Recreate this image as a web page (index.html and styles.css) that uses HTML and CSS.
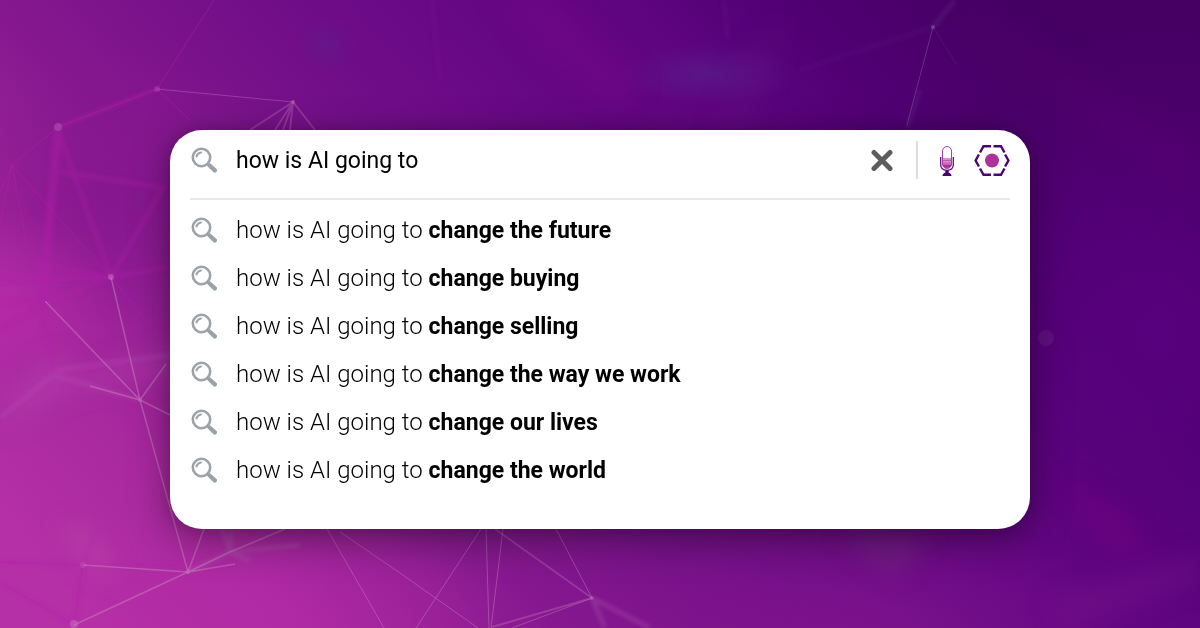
FILE: index.html
```html
<!DOCTYPE html>
<html lang="en">
<head>
<meta charset="utf-8">
<meta name="viewport" content="width=device-width, initial-scale=1">
<title>how is AI going to</title>
<link rel="stylesheet" href="styles.css">
</head>
<body class="page">
<svg class="backdrop" viewBox="0 0 1200 628" preserveAspectRatio="xMidYMid slice" aria-hidden="true">
  <defs>
    <linearGradient id="base" gradientUnits="userSpaceOnUse" x1="100" y1="628" x2="900" y2="-100">
      <stop offset="0" stop-color="#b530a6"/>
      <stop offset=".14" stop-color="#a8289e"/>
      <stop offset=".32" stop-color="#85188f"/>
      <stop offset=".5" stop-color="#710e88"/>
      <stop offset=".62" stop-color="#670884"/>
      <stop offset=".74" stop-color="#600580"/>
      <stop offset=".86" stop-color="#500073"/>
      <stop offset="1" stop-color="#460064"/>
    </linearGradient>
    <radialGradient id="violet"><stop offset="0" stop-color="#58007e"/><stop offset="1" stop-color="#58007e" stop-opacity="0"/></radialGradient>
    <radialGradient id="magenta"><stop offset="0" stop-color="#86178f"/><stop offset="1" stop-color="#86178f" stop-opacity="0"/></radialGradient>
    <radialGradient id="pink"><stop offset="0" stop-color="#b82bab"/><stop offset="1" stop-color="#b82bab" stop-opacity="0"/></radialGradient>
    <radialGradient id="teal"><stop offset="0" stop-color="#57248c"/><stop offset="1" stop-color="#57248c" stop-opacity="0"/></radialGradient>
    <filter id="soft" filterUnits="userSpaceOnUse" x="-60" y="-60" width="1320" height="748" color-interpolation-filters="sRGB"><feGaussianBlur stdDeviation="12"/></filter>
    <filter id="fine" filterUnits="userSpaceOnUse" x="-20" y="-20" width="1240" height="668" color-interpolation-filters="sRGB"><feGaussianBlur stdDeviation="2"/></filter>
  </defs>
  <rect width="1200" height="628" fill="url(#base)"/>
  <ellipse cx="1160" cy="330" rx="240" ry="300" fill="url(#violet)"/>
  <ellipse cx="850" cy="640" rx="280" ry="130" fill="url(#magenta)" opacity=".6"/>
  <ellipse cx="120" cy="190" rx="160" ry="140" fill="url(#magenta)"/>
  <ellipse cx="0" cy="300" rx="120" ry="90" fill="url(#pink)" opacity=".7"/>
  <ellipse cx="260" cy="610" rx="240" ry="110" fill="url(#pink)" opacity=".5"/>
  <ellipse cx="710" cy="74" rx="90" ry="30" fill="url(#teal)" opacity=".55"/>
  <ellipse cx="325" cy="45" rx="32" ry="28" fill="url(#teal)" opacity=".35"/>
  <g filter="url(#soft)">
    <path d="M495 -10L545 -10L640 80L615 110L540 50Z" fill="#7b0886" opacity=".4"/>
    <path d="M740 60L790 10L750 130H715Z" fill="#641082" opacity=".3"/>
    <path d="M960 0L1200 150V210L1100 140Z" fill="#5a0075" opacity=".35"/>
    <path d="M1050 600L1200 555V580L1070 628Z" fill="#771688" opacity=".4"/>
    <path d="M1060 480L1120 510L1150 560L1110 545Z" fill="#7d007b" opacity=".4"/>
    <path d="M840 535L930 535L895 575Z" fill="#76347c" opacity=".4"/>
    <path d="M20 385L55 355L75 375L180 350V370L70 390L0 430Z" fill="#b243ae" opacity=".5"/>
    <path d="M60 530L85 520L120 580L90 570Z" fill="#bf50aa" opacity=".4"/>
  </g>
  <g filter="url(#fine)" fill="none" stroke="#b31fab" stroke-width="4" opacity=".4">
    <path d="M58 127L157 89M60 172L165 188M58 130L111 277L165 185M0 278L111 277L168 267M0 302L46 302L111 277M30 262L111 277M0 330L46 302M40 300L55 375"/>
    <path stroke-width="9" d="M58 130L42 300"/>
    <path d="M0 562L83 565L230 565M83 565L74 622M0 582L74 625M83 565L97 530" opacity=".6"/>
    <path d="M53 375L140 400M53 375L0 418M55 370L170 355" stroke="#ba5cba" opacity=".7"/>
    <path d="M188 572L230 552L300 545M222 528L230 552L232 528M230 552L250 561M592 598L650 628M592 598L605 628" stroke="#b05db0"/>
    <path d="M432 0L440 80M724 0L728 40" stroke="#85239a" opacity=".5"/>
    <path d="M933 27L955 0M920 90L907 130" stroke="#72459c" opacity=".7"/>
    <path d="M933 27L800 70" stroke="#72459c" opacity=".3"/>
  </g>
  <g fill="none" stroke="#b71eac" opacity=".45">
    <path d="M214 0L157 89L58 127L12 165L0 192M12 165L0 222M12 165L30 262M12 165L111 277M111 277L170 350M0 285L111 277M0 296L46 302M157 89L190 120M0 562L83 565L74 622M0 582L74 625"/>
  </g>
  <g fill="none" stroke="#c783bd" stroke-width="1" opacity=".65">
    <path d="M111 277L140 400L188 572L204 529M46 302L140 400L166 364M140 400L170 415M140 400L90 386M83 565L188 572M188 572L230 552L285 529M74 625L188 572L235 564" stroke-width="1.500" opacity=".8"/>
    <path d="M157 89L293 102" opacity=".6"/>
    <path d="M293 102L250 130M293 102L275 130M293 102L283 130M293 102L290 130M293 102L315 130" stroke-width="2" opacity=".5"/>
    <path d="M327 529L384 628M340 532L400 573L478 628M481 529L416 628M486 529L489 628M503 529L491 628M556 529L592 598M592 598L512 628" opacity=".7"/>
    <path d="M495 529L592 598L492 627" stroke-width="2" opacity=".5"/>
    <path d="M933 27L907 125" stroke="#9065a5" opacity=".7"/>
    <path d="M933 27L957 65" stroke="#9065a5" opacity=".25"/>
  </g>
  <g fill="#c879c0" opacity=".5">
    <circle cx="58" cy="127" r="4" opacity=".7"/><circle cx="157" cy="89" r="3" opacity=".5"/>
    <circle cx="111" cy="277" r="3"/><circle cx="46" cy="302" r="1"/><circle cx="293" cy="102" r="2"/>
    <circle cx="140" cy="400" r="2"/><circle cx="188" cy="572" r="2"/><circle cx="74" cy="624" r="4"/>
    <circle cx="83" cy="565" r="3" opacity=".5"/><circle cx="592" cy="598" r="2" opacity=".7"/>
    <circle cx="933" cy="27" r="2" fill="#8b6bb0"/>
  </g>
  <circle cx="1046" cy="338" r="8" fill="#742a86" opacity=".35"/>
</svg>
<svg class="sprite" aria-hidden="true">
  <symbol id="lens" viewBox="0 0 26 26">
    <circle cx="10.500" cy="10.500" r="8.700" fill="none" stroke="#9aa3aa" stroke-width="2.600"/>
    <path d="M5.500 9.500A5.500 5.500 0 0 1 10 5.500" fill="none" stroke="#9aa3aa" stroke-width="2" stroke-linecap="round"/>
    <path d="M16.500 16.500L19 19" stroke="#9aa3aa" stroke-width="3"/>
    <path d="M18.600 18.500L23.800 23.300" stroke="#9aa3aa" stroke-width="4.400" stroke-linecap="round"/>
  </symbol>
</svg>
<main class="card">
  <form class="search" role="search">
    <svg class="lens"><use href="#lens"/></svg>
    <input class="query" type="text" aria-label="Search" value="how is AI going to" autocomplete="off">
    <button class="tool clear" type="reset" aria-label="Clear">
      <svg width="22" height="22" viewBox="0 0 22 22"><path d="M3 3.500L19 19.500M19 3.500L3 19.500" stroke="#5d5d5d" stroke-width="5" stroke-linecap="round"/></svg>
    </button>
    <span class="divider"></span>
    <button class="tool voice" type="button" aria-label="Search by voice">
      <svg width="14" height="32" viewBox="0 0 14 32">
        <path d="M2.500 14H11.500V19.500A4.500 4.500 0 0 1 2.500 19.500Z" fill="#d78fc9"/>
        <path d="M2.500 16.500H11.500M2.500 19H11.500" stroke="#bd5bb0" stroke-width="1"/>
        <path d="M2.500 20.500H11.500Q11 24 7 24T2.500 20.500Z" fill="#ad2f98"/>
        <rect x="2.500" y="2.500" width="9" height="22" rx="4.500" fill="none" stroke="#b13aa0"/>
        <path d="M.7 13V20.500Q.7 26.300 7 26.300T13.300 20.500V13" fill="none" stroke="#5b1281" stroke-width="1.300"/>
        <path d="M5 26.500H9L8.500 28.500Q11.500 29.500 11.500 32H2.500Q2.500 29.500 5.500 28.500Z" fill="#4b0070"/>
      </svg>
    </button>
    <button class="tool image" type="button" aria-label="Search by image">
      <svg width="36" height="32" viewBox="0 0 36 32">
        <g fill="none" stroke="#4b0572" stroke-width="2.400">
          <path d="M17 2.200H9.500L6 8.500M19.500 2.200H27L30.500 8.500M17 30.800H9.500L6 24.500M19.500 30.800H27L30.500 24.500"/>
          <path d="M4.900 10.500L1.600 16.500L4.900 22.500M31.100 10.500L34.400 16.500L31.100 22.500"/>
        </g>
        <circle cx="18" cy="16.500" r="7" fill="#ae3299"/>
      </svg>
    </button>
  </form>
  <ul class="suggestions">
    <li><a class="suggestion" href="#"><svg class="lens"><use href="#lens"/></svg><span>how is AI going to <b>change the future</b></span></a></li>
    <li><a class="suggestion" href="#"><svg class="lens"><use href="#lens"/></svg><span>how is AI going to <b>change buying</b></span></a></li>
    <li><a class="suggestion" href="#"><svg class="lens"><use href="#lens"/></svg><span>how is AI going to <b>change selling</b></span></a></li>
    <li><a class="suggestion" href="#"><svg class="lens"><use href="#lens"/></svg><span>how is AI going to <b>change the way we work</b></span></a></li>
    <li><a class="suggestion" href="#"><svg class="lens"><use href="#lens"/></svg><span>how is AI going to <b>change our lives</b></span></a></li>
    <li><a class="suggestion" href="#"><svg class="lens"><use href="#lens"/></svg><span>how is AI going to <b>change the world</b></span></a></li>
  </ul>
</main>
</body>
</html>
```
FILE: styles.css
```css
*,
*::before,
*::after {
  box-sizing: border-box;
}

.page {
  min-height: 100vh;
  margin: 0;
  padding: 130px 24px 64px;
  background: #690b83;
  color: #000;
  font-family: Roboto, "Liberation Sans", sans-serif;
  font-size: 24px;
  font-weight: 320;
  line-height: 32px;
}

.backdrop {
  position: fixed;
  inset: 0;
  z-index: -1;
  width: 100%;
  height: 100%;
}

.sprite {
  position: absolute;
  width: 0;
  height: 0;
}

.card {
  max-width: 860px;
  margin: 0 auto;
  padding: 0 20px 35px;
  border-radius: 32px;
  background: #fff;
  box-shadow: 0 10px 40px rgba(0, 0, 0, 0.4), 0 0 16px rgba(0, 0, 0, 0.16);
}

.search {
  display: flex;
  align-items: center;
  padding: 10px 0 18px;
  border-bottom: 2px solid #e7e7ed;
}

.lens {
  flex: none;
  width: 26px;
  height: 26px;
  margin: 0 19px 0 1px;
}

.query {
  flex: 1;
  min-width: 0;
  height: 40px;
  padding: 0;
  border: 0;
  outline: 0;
  background: none;
  color: inherit;
  font: inherit;
  font-size: 23px;
  font-weight: 400;
}

.tool {
  display: flex;
  flex: none;
  padding: 0;
  border: 0;
  background: none;
  cursor: pointer;
}

.divider {
  flex: none;
  width: 2px;
  height: 38px;
  margin: 0 22px 0 23px;
  background: #dcdce3;
}

.voice {
  margin-right: 20px;
}

.suggestions {
  margin: 0;
  padding: 6px 0 0;
  list-style: none;
}

.suggestion {
  display: flex;
  align-items: center;
  min-height: 48px;
  color: inherit;
  text-decoration: none;
}

.suggestion b {
  font-size: 23px;
  font-weight: 700;
}
```
